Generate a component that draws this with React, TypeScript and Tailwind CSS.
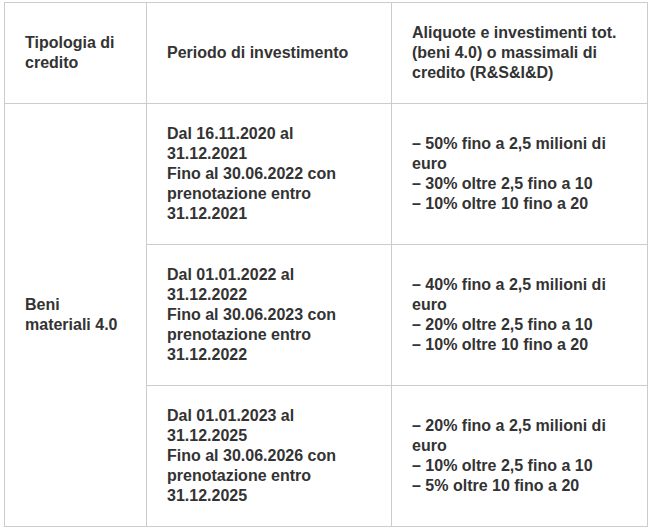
import React from "react";

const periods = [
  {
    period: ["Dal 16.11.2020 al", "31.12.2021", "Fino al 30.06.2022 con", "prenotazione entro", "31.12.2021"],
    rates: ["– 50% fino a 2,5 milioni di", "euro", "– 30% oltre 2,5 fino a 10", "– 10% oltre 10 fino a 20"],
  },
  {
    period: ["Dal 01.01.2022 al", "31.12.2022", "Fino al 30.06.2023 con", "prenotazione entro", "31.12.2022"],
    rates: ["– 40% fino a 2,5 milioni di", "euro", "– 20% oltre 2,5 fino a 10", "– 10% oltre 10 fino a 20"],
  },
  {
    period: ["Dal 01.01.2023 al", "31.12.2025", "Fino al 30.06.2026 con", "prenotazione entro", "31.12.2025"],
    rates: ["– 20% fino a 2,5 milioni di", "euro", "– 10% oltre 2,5 fino a 10", "– 5% oltre 10 fino a 20"],
  },
];

const Lines = ({ lines }: { lines: string[] }) => (
  <div>
    {lines.map((l, i) => (
      <div key={i} className="whitespace-nowrap">
        {l}
      </div>
    ))}
  </div>
);

const cell = "bg-white flex items-center px-5";

export default function App() {
  return (
    <div className="min-h-[528px] w-[650px] bg-white pt-[2px] pl-[4px]">
      <div
        className="grid w-[644px] grid-cols-[141px_244px_255px] grid-rows-[100px_140px_140px_140px] gap-px bg-[#cccccc] p-px text-[16px] leading-[20px] font-bold text-[#333333]"
        style={{ fontFamily: '"Liberation Sans", Arial, sans-serif' }}
      >
        <div className={cell}>
          <Lines lines={["Tipologia di", "credito"]} />
        </div>
        <div className={cell}>
          <Lines lines={["Periodo di investimento"]} />
        </div>
        <div className={cell}>
          <Lines lines={["Aliquote e investimenti tot.", "(beni 4.0) o massimali di", "credito (R&S&I&D)"]} />
        </div>

        <div className={`${cell} row-span-3`}>
          <Lines lines={["Beni", "materiali 4.0"]} />
        </div>
        {periods.map((p, i) => (
          <React.Fragment key={i}>
            <div className={cell}>
              <Lines lines={p.period} />
            </div>
            <div className={cell}>
              <Lines lines={p.rates} />
            </div>
          </React.Fragment>
        ))}
      </div>
    </div>
  );
}
